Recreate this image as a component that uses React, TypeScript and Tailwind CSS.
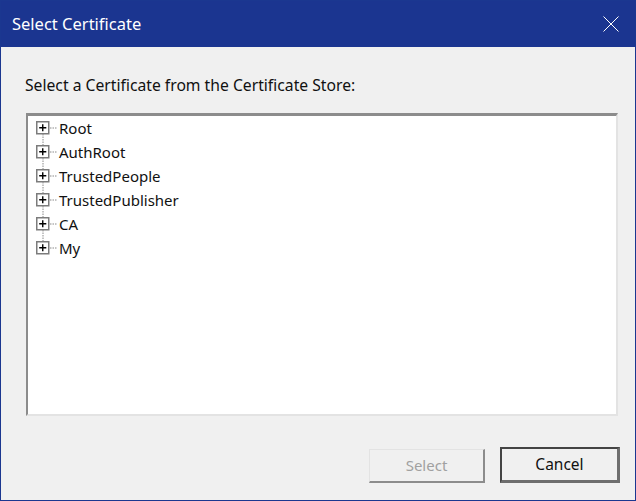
const items = ["Root", "AuthRoot", "TrustedPeople", "TrustedPublisher", "CA", "My"];

function TreeRow({ label, last }: { label: string; last: boolean }) {
  return (
    <div className="relative flex h-6 items-center pl-[8px]">
      <svg width="14" height="14" viewBox="0 0 14 14" className="shrink-0">
        <rect x="0.75" y="0.75" width="12" height="12" fill="#fff" stroke="#7c7c7c" strokeWidth="1.5" />
        <path d="M3.2 6.75h7.1M6.75 3.2v7.1" stroke="#000" strokeWidth="1.4" />
      </svg>
      <svg width="7" height="2" className="shrink-0">
        <path d="M0 1h7" stroke="#8a8a8a" strokeWidth="1" strokeDasharray="1.5 1" />
      </svg>
      <span className="ml-[2px] text-[15px] leading-none text-[#111]">{label}</span>
      {!last && (
        <svg width="2" height="11" className="absolute left-[14px] top-[18px]">
          <path d="M1 0v11" stroke="#8a8a8a" strokeWidth="1" strokeDasharray="1.5 1" />
        </svg>
      )}
    </div>
  );
}

export default function App() {
  return (
    <div
      className="flex h-[501px] w-[636px] flex-col border border-[#1b3790] bg-[#f0f0f0]"
      style={{ fontFamily: '"Noto Sans", sans-serif' }}
    >
      <div className="flex h-[46px] shrink-0 items-center justify-between bg-[#1b3590] pl-[11px] pr-[16px]">
        <span className="mt-[1px] text-[16.5px] text-white">Select Certificate</span>
        <svg width="16" height="16" viewBox="0 0 16 16">
          <path d="M.5.5l15 15M15.5.5l-15 15" stroke="#fff" strokeWidth="1" fill="none" />
        </svg>
      </div>
      <div className="flex flex-1 flex-col pl-[25px] pr-[15px]">
        <div className="-ml-[1px] mt-[27px] text-[15.7px] leading-[22px] text-[#111]">
          Select a Certificate from the Certificate Store:
        </div>
        <div className="mt-[17px] flex h-[303px] w-[592px] flex-col border-2 border-t-[3px] border-[#e3e3e3] border-t-[#8c8c8c] border-l-[#8c8c8c] bg-white">
          {items.map((it, i) => (
            <TreeRow key={it} label={it} last={i === items.length - 1} />
          ))}
        </div>
        <div className="mt-[31px] flex items-end justify-end gap-[15px]">
          <button className="h-[34px] w-[116px] border border-[#e3e3e3] border-r-2 border-b-2 border-r-[#8c8c8c] border-b-[#8c8c8c] bg-[#f0f0f0] text-[15px] text-[#a0a0a0]">
            Select
          </button>
          <button className="h-[36px] w-[120px] border-2 border-[#444] border-r-[3px] border-b-[3px] border-r-[#6e6e6e] border-b-[#6e6e6e] bg-[#f0f0f0] pt-[1px] text-[15.5px] text-[#111]">
            Cancel
          </button>
        </div>
      </div>
    </div>
  );
}
